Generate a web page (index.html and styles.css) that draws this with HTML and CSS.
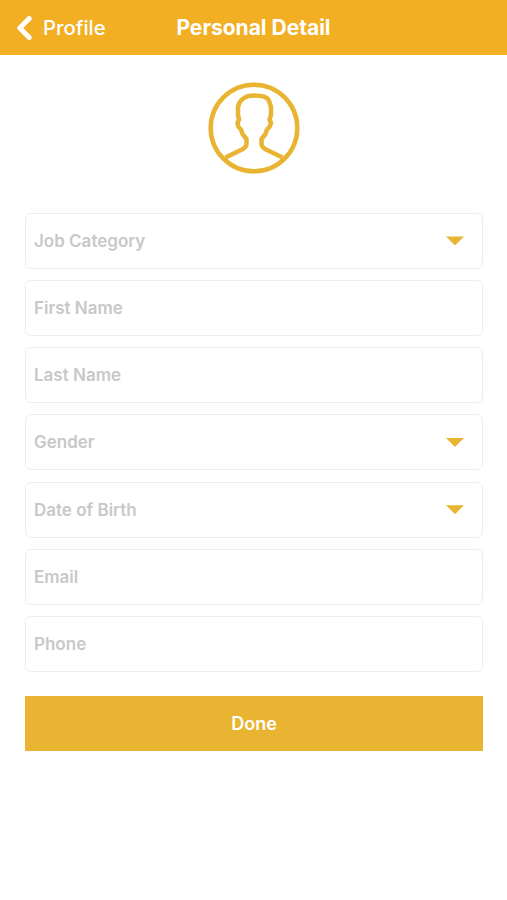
FILE: index.html
```html
<!DOCTYPE html>
<html lang="en">
<head>
<meta charset="utf-8">
<title>Personal Detail</title>
<link rel="stylesheet" href="styles.css">
</head>
<body>
<header class="bar">
  <a class="back"><svg class="chevron" width="16" height="26" viewBox="0 0 16 26"><path d="M13.200 3.500 3.800 13l9.400 9.500"/></svg><span class="back-label">Profile</span></a>
  <h1 class="title">Personal Detail</h1>
</header>
<main class="content">
  <svg class="avatar" width="92" height="92" viewBox="0 0 92 92"><circle cx="46" cy="46" r="43.300"/><path d="M17.500 75.500L34 67.500Q38.500 65 38.500 62V57L34.500 52L33 47.500L30.500 45L29.500 41L31 37.500L30 33V25C31.500 17 38 13.500 46 13.500C54 13.500 60 15 61 19L63 25V33L61.500 37.500L63 41L61.500 45L59 47.500L57.500 52L53.500 57V62Q53.500 65 58 67.500L74.500 75.500"/></svg>
  <form class="form">
    <div class="field"><span>Job Category</span><i class="arrow"></i></div>
    <div class="field"><span>First Name</span></div>
    <div class="field"><span>Last Name</span></div>
    <div class="field"><span>Gender</span><i class="arrow"></i></div>
    <div class="field"><span>Date of Birth</span><i class="arrow"></i></div>
    <div class="field"><span>Email</span></div>
    <div class="field"><span>Phone</span></div>
    <button class="done" type="button">Done</button>
  </form>
</main>
</body>
</html>
```
FILE: styles.css
```css
* { box-sizing: border-box; }
body { margin: 0; background: #fff; font-family: Inter, "Liberation Sans", sans-serif; }
.bar { height: 55px; background: #f3af23; color: #fff; display: grid; grid-template-columns: 1fr auto 1fr; align-items: center; }
.back { display: flex; align-items: center; padding-left: 16px; }
.chevron { fill: none; stroke: #fff; stroke-width: 5; stroke-linecap: round; stroke-linejoin: round; }
.back-label { margin-left: 11px; font-size: 20.3px; font-weight: 500; }
.title { margin: 0; font-size: 21px; font-weight: 700; }
.content { padding: 27px 24px 0 25px; }
.avatar { display: block; margin: 0 auto; fill: none; stroke: #e8b431; stroke-width: 4.5; stroke-linejoin: round; }
.form { display: flex; flex-direction: column; gap: 11.2px; margin-top: 38.9px; }
.field { height: 56px; border: 1px solid #eee; border-radius: 6px; padding: 0 18px 0 8px; display: flex; align-items: center; justify-content: space-between; font-size: 17px; font-weight: 600; color: #c8c8c8; }
.arrow { width: 18px; height: 9px; background: #e8b431; clip-path: polygon(0 0, 100% 0, 50% 100%); }
.done { margin-top: 13px; height: 55px; border: 0; padding: 0; background: #e8b431; color: #fff; font-family: inherit; font-size: 18px; font-weight: 600; }
```
